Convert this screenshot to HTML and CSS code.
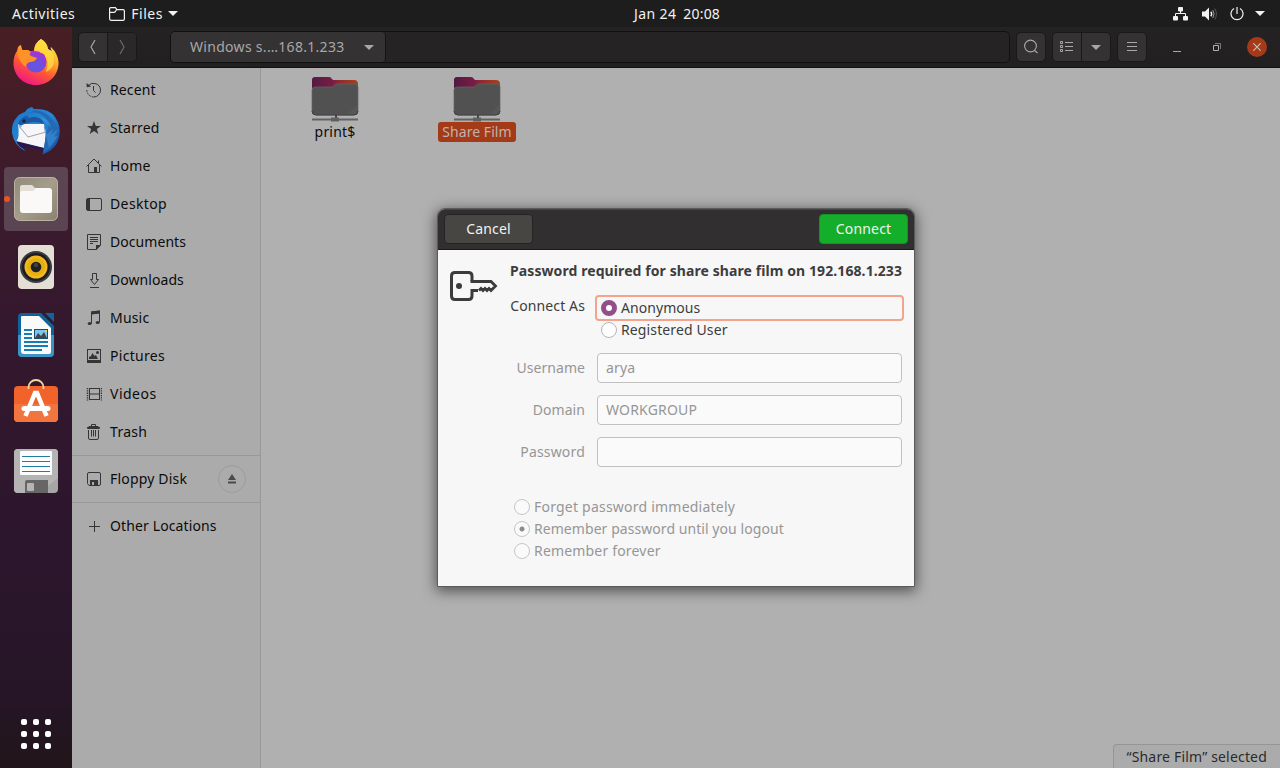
FILE: index.html
```html
<!DOCTYPE html>
<html lang="en">
<head>
<meta charset="utf-8">
<title>Files</title>
<link rel="stylesheet" href="styles.css">
</head>
<body>
<header class="topbar">
  <div class="topbar-left">
    <span class="ls-title">Activities</span>
    <span class="app-menu">
      <svg width="16" height="14" viewBox="0 0 16 14" fill="none" stroke="#f2f2f2" stroke-width="1.2"><path d="M.6 11.5V1.6Q.6.6 1.6.6H6.4L8 2.6H14Q15.4 2.6 15.4 4V12Q15.4 13.4 14 13.4H2.4Q.6 13.4.6 11.5ZM.6 5.4H4.8Q6 5.4 6.5 4.2L7.7 2.6"/></svg>
      <span class="ls-title app-name">Files</span>
      <svg width="10" height="5" viewBox="0 0 10 5" fill="#f2f2f2"><path d="M0 0H10L5 5Z"/></svg>
    </span>
  </div>
  <div class="clock"><span class="ls-date">Jan 24</span><span>20:08</span></div>
  <div class="tray">
    <svg width="16" height="14" viewBox="0 0 16 14" fill="#f2f2f2"><rect x="5" width="5" height="4.5" rx="1"/><rect y="9" width="5" height="4.5" rx="1"/><rect x="10" y="9" width="5" height="4.5" rx="1"/><path d="M2.5 10V6.5H12.5V10M7.5 4V6.5" fill="none" stroke="#f2f2f2"/></svg>
    <svg class="volume" width="15" height="14" viewBox="0 0 15 14" fill="none" stroke="#f2f2f2"><path d="M0 4.5H3L7 .5V13.5L3 9.5H0Z" fill="#f2f2f2" stroke="none"/><path d="M8.800 4.700Q10.600 7 8.800 9.300" stroke-width="1.4"/><path d="M10.800 3Q13.300 7 10.800 11" stroke="#999"/><path d="M12.800 1.500Q16 7 12.800 12.500" stroke="#555"/></svg>
    <svg class="power" width="14" height="14" viewBox="0 0 14 14" fill="none" stroke="#f2f2f2" stroke-width="1.2"><path d="M7 0V7M4 1.500A6 6 0 1 0 10 1.500"/></svg>
    <svg width="10" height="5" viewBox="0 0 10 5" fill="#f2f2f2"><path d="M0 0H10L5 5Z"/></svg>
  </div>
</header>
<div class="workspace">
  <nav class="dock">
    <div class="launcher raised">
      <svg width="48" height="48" viewBox="0 0 48 48">
        <defs>
          <linearGradient id="ff" x1=".8" y1="0" x2=".3" y2="1"><stop offset="0" stop-color="#fff44f"/><stop offset=".35" stop-color="#ffb02e"/><stop offset=".65" stop-color="#ff5634"/><stop offset="1" stop-color="#f0138b"/></linearGradient>
          <radialGradient id="ffg" cx=".5" cy=".7" r=".7"><stop offset="0" stop-color="#5a5be8"/><stop offset=".55" stop-color="#7a48dd"/><stop offset="1" stop-color="#b52ed0"/></radialGradient>
        </defs>
        <path d="M29 1Q35 4 36 11L40 13Q38 10 39 9Q46 16 46.500 24C47 37 37 47 24 47C11 47 1 37 1.500 24Q2 17 5 13L6 9Q8 7 9 7L10 12L15 12Q19 14 22 13Q22 5 29 1Z" fill="url(#ff)"/>
        <circle cx="24" cy="24" r="10.500" fill="url(#ffg)"/>
        <path d="M17 14Q23 11 28 13L27 15Q33 15 33 19L30 18Q26 15 22 16Z" fill="#a431d9"/>
        <path d="M6 18Q6 12 9 9L11 13L17 12Q16 15 19 18L25 20Q23 24 18 24Q14 25 14 29Q8 25 6 18Z" fill="#ff9226"/>
        <path d="M29 1Q35 5 36 11Q43 16 42 24Q41 31 34 34Q38 22 32 16Q27 13 22 13Q23 5 29 1Z" fill="#ffdc3e" opacity=".8"/>
      </svg>
    </div>
    <div class="launcher">
      <svg width="50" height="50" viewBox="0 0 50 50">
        <defs><linearGradient id="tb" x1="0" y1="0" x2="1" y2="1"><stop offset="0" stop-color="#1f74c6"/><stop offset=".5" stop-color="#2488d8"/><stop offset="1" stop-color="#1d3e91"/></linearGradient></defs>
        <path d="M14 6Q16 2 21 1L23 3Q38 2 44 11Q50 20 48.500 29Q46 44 31 48.500L34 43L10 38L14 45Q3 39 1 27Q0 17 6 11Q8 8 14 6Z" fill="url(#tb)"/>
        <path d="M7 18L14 18L33 18Q36 26 33 42L5 36Q9 32 7 18Z" fill="#f6f6f8"/>
        <path d="M8 20L17 31L35 26" fill="none" stroke="#a2a3aa"/>
        <path d="M5 35L33 42L33 45L15 40L13 43Q7 40 5 35Z" fill="#271752"/>
        <path d="M12 11Q20 4 29 8Q42 14 35 30L32 46Q46 41 47 25Q42 6 23 4Z" fill="#2569b4"/>
        <path d="M12 16Q20 9 28 12Q35 15 34 27L33 18Q22 13 9 20Z" fill="#1e559d"/>
        <path d="M35 29L42 23L40 29L47 23L43 31L47 30L38 42ZM29 11Q39 13 40 22" fill="#3c98dc" opacity=".55"/>
        <path d="M7 18Q10 10 17 10Q19 14 14 17L9 20Z" fill="#195da9"/><circle cx="13" cy="15" r="1.800" fill="#182640"/>
        <path d="M7 18L11 20L9 23Z" fill="#8fb8d4"/>
      </svg>
    </div>
    <div class="launcher active">
      <i class="running"></i>
      <svg width="46" height="46" viewBox="0 0 46 46">
        <defs><linearGradient id="fl" x1="0" y1="0" x2="1" y2="1"><stop offset="0" stop-color="#938b7b"/><stop offset=".5" stop-color="#a49d8b"/><stop offset="1" stop-color="#8b8272"/></linearGradient></defs>
        <rect x="1.500" y="1.500" width="43" height="43" rx="5" fill="url(#fl)" stroke="#b9b39f"/>
        <path d="M7 35V12Q7 9 9 9H19L22 12H36V35Z" fill="#e3dfd6"/>
        <path d="M7 17Q7 15 9 15H20L23 12H36Q39 12 39 15V34Q39 37 36 37H10Q7 37 7 34Z" fill="#faf9f8"/>
      </svg>
    </div>
    <div class="launcher">
      <svg width="38" height="46" viewBox="0 0 38 46"><rect x="1" y="1" width="36" height="44" rx="4" fill="#e4dfd4"/><circle cx="19" cy="23" r="16" fill="#3c3c43"/><circle cx="19" cy="23" r="14" fill="#1d1c20"/><circle cx="19" cy="23" r="11.500" fill="#f1b91d"/><circle cx="19" cy="23" r="9" fill="#dda90e" opacity=".6"/><circle cx="19" cy="23" r="5.300" fill="#202023"/><circle cx="19" cy="21" r="2.200" fill="#424246"/></svg>
    </div>
    <div class="launcher">
      <svg width="38" height="46" viewBox="0 0 38 46">
        <path d="M5 1H24L37 14V41Q37 45 33 45H5Q1 45 1 41V5Q1 1 5 1Z" fill="#10639a"/><path d="M1 23H37V41Q37 45 33 45H5Q1 45 1 41Z" fill="#3d94c4"/>
        <path d="M5 4H22L34 16V40Q34 42 32 42H7Q4 42 4 39V5Q4 4 5 4Z" fill="#fafafa"/><path d="M28 1H37V10Z" fill="#11659e"/>
        <path d="M7 18H15M7 22H15M7 26H15M7 30H31M7 34H31M7 38H25" stroke="#167eb5" stroke-width="2"/>
        <rect x="17" y="17" width="14" height="10" fill="#174d68"/><rect x="18" y="18" width="12" height="8" fill="#79c6ed"/><path d="M18 26L21 21L24 24L27 20L30 26Z" fill="#444"/><rect x="28" y="18" width="2" height="2" fill="#f2cf38"/>
      </svg>
    </div>
    <div class="launcher raised-more">
      <svg width="46" height="44" viewBox="0 0 46 44">
        <rect x="1" y="7" width="44" height="36" rx="4" fill="#f2622b"/><path d="M1 25H45V39Q45 43 41 43H5Q1 43 1 39Z" fill="#f2743f"/>
        <path d="M15.500 10V8.500A7.500 7.500 0 0 1 30.500 8.500V10" fill="none" stroke="#f6d49f" stroke-width="1.800"/>
        <path d="M12.500 37L22 14H24L33.500 37" fill="none" stroke="#fff" stroke-width="4.500"/><path d="M11 29.500H35" stroke="#fff" stroke-width="5" stroke-linecap="round"/>
      </svg>
    </div>
    <div class="launcher">
      <svg width="46" height="46" viewBox="0 0 46 46"><rect x="1" y="1" width="44" height="44" rx="4" fill="#a6a6a6"/><path d="M5 1H41Q45 1 45 5V30L27 45H5Q1 45 1 41V5Q1 1 5 1Z" fill="#b4b4b4"/><rect x="7" y="3" width="32" height="24" rx="1" fill="#fcfcfc"/><path d="M9 8.500H37M9 13.500H37M9 18.500H37M9 23.500H37" stroke="#267ba0"/><path d="M12 45V34Q12 32 14 32H35V45Z" fill="#666"/><rect x="14" y="35" width="7" height="8" rx="1" fill="#b5b5b5"/></svg>
    </div>
    <div class="app-grid"><i></i><i></i><i></i><i></i><i></i><i></i><i></i><i></i><i></i></div>
  </nav>
  <main class="window">
    <div class="headerbar">
      <div class="btn-group nav-buttons">
        <span class="btn"><svg width="8" height="16" viewBox="0 0 8 16" fill="none" stroke="#a8a8a8" stroke-width="1.200"><path d="M6 1L2 8L6 15"/></svg></span>
        <span class="btn"><svg width="8" height="16" viewBox="0 0 8 16" fill="none" stroke="#6c6b6b" stroke-width="1.200"><path d="M2 1L6 8L2 15"/></svg></span>
      </div>
      <div class="pathbar"><div class="path"><span class="ls-path">Windows s.…168.1.233</span><svg width="10" height="5" viewBox="0 0 10 5" fill="#a8a8a8"><path d="M0 0H10L5 5Z"/></svg></div></div>
      <div class="btn-group search"><span class="btn"><svg width="16" height="16" viewBox="0 0 16 16" fill="none" stroke="#a8a8a8" stroke-width="1.100"><circle cx="7.500" cy="7" r="5.900"/><path d="M11.500 11.500L14.500 14"/></svg></span></div>
      <div class="btn-group view"><span class="btn"><svg width="14" height="12" viewBox="0 0 14 12" fill="none" stroke="#a8a8a8"><path d="M5 1.500H13M5 5.500H13M5 9.500H13M.5.5H2.500V2.500H.5ZM.5 4.500H2.500V6.500H.5ZM.5 8.500H2.500V10.500H.5Z"/></svg></span><span class="btn"><svg width="10" height="5" viewBox="0 0 10 5" fill="#a8a8a8"><path d="M0 0H10L5 5Z"/></svg></span></div>
      <div class="btn-group menu"><span class="btn"><svg width="12" height="10" viewBox="0 0 12 10" fill="none" stroke="#a8a8a8"><path d="M1 .5H11M1 4.500H11M1 8.500H11"/></svg></span></div>
      <div class="controls">
        <svg class="minimize" width="8" height="9" viewBox="0 0 8 9" stroke="#a8a8a8"><path d="M0 7.500H8"/></svg>
        <svg width="8" height="8" viewBox="0 0 8 8" fill="none"><path d="M2 .5H7.500V6" stroke="#777"/><path d="M.5 2.500H5.500V7.500H.5Z" stroke="#b0b0b0"/></svg>
        <span class="close"><svg width="8" height="8" viewBox="0 0 8 8" stroke="#c4bdb9" stroke-width="1.200"><path d="M.3.3L7.700 7.700M7.700.3L.3 7.700"/></svg></span>
      </div>
    </div>
    <div class="content">
      <aside class="sidebar">
        <div class="places">
          <div class="place"><svg viewBox="0 0 16 16"><path d="M2.400 3.500A7 7 0 0 1 14.500 8A6.800 6.800 0 0 1 7.700 15"/><path d="M7.700 15A7 7 0 0 1 .8 8" stroke-dasharray="2 1"/><path d="M7.500 4V8.500L9.500 10.500"/><path class="solid" d="M.5 1L.8 5.300L5 4.500Z"/></svg><span class="ls-tight">Recent</span></div>
          <div class="place"><svg viewBox="0 0 16 16"><path class="solid" d="M8 1L9.800 6H15L10.800 9L12.300 14L8 11L3.700 14L5.200 9L1 6H6.200Z"/></svg><span>Starred</span></div>
          <div class="place"><svg viewBox="0 0 16 16"><path d="M.5 8.500L8 1L15.500 8.500M2.500 7V14.500H13.500V7M12.500 5V2.500"/><path class="solid" d="M8 9H11V14H8Z"/></svg><span>Home</span></div>
          <div class="place"><svg viewBox="0 0 16 16"><rect x=".5" y="2.500" width="15" height="12" rx="1.500"/><path class="solid" d="M1 3H4V14H1Z"/></svg><span class="ls-loose">Desktop</span></div>
          <div class="place"><svg viewBox="0 0 16 16"><path d="M1.500.5H14.500V11L10.500 15.500H1.500ZM4 3.500H12M4 5.500H12M4 7.500H12M4 9.500H7"/><path class="solid" d="M10 11H15L10 16Z"/></svg><span class="ls-none">Documents</span></div>
          <div class="place"><svg viewBox="0 0 16 16"><path d="M6.500 1.500H10.500V7.500H12.500L8.500 12.500L4.500 7.500H6.500ZM4 15.500H13"/></svg><span class="ls-none">Downloads</span></div>
          <div class="place"><svg viewBox="0 0 16 16"><path d="M5.500 13.500V2L13.500 1V12M5.500 4L13.500 3"/><path class="solid" d="M5 1.500L14 .5V3.200L5 4.200Z"/><ellipse class="solid" cx="3.700" cy="13.500" rx="2" ry="1.600"/><ellipse class="solid" cx="11.700" cy="12.500" rx="2" ry="1.600"/></svg><span>Music</span></div>
          <div class="place"><svg viewBox="0 0 16 16"><rect x="1.500" y="1.500" width="13" height="12"/><path class="solid" d="M1 12H15V15H1ZM3 11V9L5 8L6.500 5L8.500 8L10 7L12 11Z"/><circle class="solid" cx="11.500" cy="4.500" r="1.500"/></svg><span class="ls-path">Pictures</span></div>
          <div class="place"><svg viewBox="0 0 16 16"><path d="M3.500 2V14M13.500 2V14M3 2.500H14M3 8H14M3 13.500H14"/><path d="M1.500 2V14.500M15.500 2V14.500" stroke-width="1.500" stroke-dasharray="1.300 1"/></svg><span class="ls-title">Videos</span></div>
          <div class="place"><svg viewBox="0 0 16 16"><path d="M1 3.500H14M5.500 3V.5H9.500V3M2.500 6V14Q2.500 15.500 4 15.500H11Q12.500 15.500 12.500 14V6M5.500 6V12.500M7.500 6V12.500M9.500 6V12.500"/><path class="solid" d="M3 2H12L14 5H1Z"/></svg><span class="ls-path">Trash</span></div>
        </div>
        <div class="places mounts">
          <div class="place"><svg viewBox="0 0 16 16"><path d="M3 1.500H13Q14.500 1.500 14.500 3V13Q14.500 14.500 13 14.500H3L1.500 12.500V3Q1.500 1.500 3 1.500Z"/><path class="solid" fill-rule="evenodd" d="M4 9H12V15H4ZM6 11V14H8V11Z"/></svg><span>Floppy Disk</span><span class="eject"><svg viewBox="0 0 8 10"><path d="M4 0L8 6H0ZM0 7.500H8V9.500H0Z"/></svg></span></div>
        </div>
        <div class="places">
          <div class="place"><svg viewBox="0 0 16 16"><path d="M3 8.500H14M8.500 3V14"/></svg><span class="ls-tight">Other Locations</span></div>
        </div>
      </aside>
      <section class="files">
        <div class="file"><svg width="48" height="46" viewBox="0 0 48 46"><defs><linearGradient id="fd" x1="0" y1="0" x2="1" y2="0"><stop offset="0" stop-color="#531a41"/><stop offset=".45" stop-color="#7a1c44"/><stop offset=".6" stop-color="#8f2b30"/><stop offset="1" stop-color="#a8401b"/></linearGradient></defs><path d="M1 12V4Q1 1 4 1H18Q20 1 21 3L22 4H43Q47 4 47 8V14Z" fill="url(#fd)"/><path d="M1 14Q1 11 4 11H20Q22 11 23 9.500Q24 8 26 8H44Q47 8 47 11V35Q47 39 43 39H5Q1 39 1 35Z" fill="#515151" stroke="#646464" stroke-width=".7"/><path d="M36 38L47 28V35Q47 38 43 38Z" fill="#565656"/><path d="M1 35Q1 39 5 39H43Q47 39 47 35" fill="none" stroke="#3e3e3e"/><path d="M25 39V42" stroke="#444" stroke-width="2"/><path d="M1 43.500H47" stroke="#626262" stroke-width="2"/><rect x="20" y="41.500" width="8" height="4" fill="#606060"/></svg><span>print$</span></div>
        <div class="file selected"><svg width="48" height="46" viewBox="0 0 48 46"><path d="M1 12V4Q1 1 4 1H18Q20 1 21 3L22 4H43Q47 4 47 8V14Z" fill="url(#fd)"/><path d="M1 14Q1 11 4 11H20Q22 11 23 9.500Q24 8 26 8H44Q47 8 47 11V35Q47 39 43 39H5Q1 39 1 35Z" fill="#515151" stroke="#646464" stroke-width=".7"/><path d="M36 38L47 28V35Q47 38 43 38Z" fill="#565656"/><path d="M1 35Q1 39 5 39H43Q47 39 47 35" fill="none" stroke="#3e3e3e"/><path d="M25 39V42" stroke="#444" stroke-width="2"/><path d="M1 43.500H47" stroke="#626262" stroke-width="2"/><rect x="20" y="41.500" width="8" height="4" fill="#606060"/></svg><span class="ls-none">Share Film</span></div>
      </section>
      <div class="status">“Share Film” selected</div>
    </div>
  </main>
</div>
<div class="dialog">
  <div class="dialog-header"><span class="dbtn">Cancel</span><span class="dbtn connect">Connect</span></div>
  <div class="dialog-body">
    <svg class="key" width="50" height="32" viewBox="0 0 50 32" fill="none" stroke="#3b3b3b" stroke-width="3"><path d="M23 11V6Q23 2.500 19.500 2.500H6Q2.500 2.500 2.500 6V26Q2.500 29.500 6 29.500H19.500Q23 29.500 23 26V20.500H29"/><path d="M21.500 11.500H42L46.500 16L42 20.500L40 18.500L38 20.500L36 18.500L34 20.500L32 18.500L30 20.500" stroke-width="2.800"/><circle cx="10" cy="16" r="3" fill="#3b3b3b" stroke="none"/></svg>
    <div class="form">
      <h1>Password required for share share film on 192.168.1.233</h1>
      <div class="row connect-as"><span class="label ls-tight">Connect As</span>
        <div class="choices"><div class="radio focused"><i class="dot on"></i><span class="ls-none">Anonymous</span></div><div class="radio"><i class="dot"></i><span class="ls-tight">Registered User</span></div></div>
      </div>
      <div class="row dim"><span class="label ls-none">Username</span><div class="entry">arya</div></div>
      <div class="row dim"><span class="label ls-none">Domain</span><div class="entry">WORKGROUP</div></div>
      <div class="row dim"><span class="label">Password</span><div class="entry"></div></div>
      <div class="remember dim">
        <div class="radio"><i class="dot"></i><span class="ls-forget">Forget password immediately</span></div>
        <div class="radio"><i class="dot off"></i><span class="ls-none">Remember password until you logout</span></div>
        <div class="radio"><i class="dot"></i><span>Remember forever</span></div>
      </div>
    </div>
  </div>
</div>
</body>
</html>
```
FILE: styles.css
```css
* { box-sizing: border-box; }
body {
  margin: 0;
  width: 1280px;
  height: 768px;
  overflow: hidden;
  position: relative;
  display: flex;
  flex-direction: column;
  font: 14px/20px "Noto Sans", sans-serif;
  letter-spacing: .18px;
  white-space: nowrap;
}
svg { display: block; flex: none; }
.ls-title { letter-spacing: .5px; }
.ls-date { letter-spacing: .4px; }
.ls-path { letter-spacing: .3px; }
.ls-loose { letter-spacing: .38px; }
.ls-forget { letter-spacing: .22px; }
.ls-tight { letter-spacing: .12px; }
.ls-none { letter-spacing: .06px; }

.topbar {
  flex: none;
  height: 27px;
  background: #1d1d1d;
  color: #f2f2f2;
  display: grid;
  grid-template-columns: 1fr auto 1fr;
  align-items: center;
  padding: 0 15px 0 12px;
}
.topbar-left, .app-menu, .tray, .clock { display: flex; align-items: center; }
.topbar-left { gap: 34px; }
.app-name { margin: 0 5px 0 6px; }
.clock { gap: 7px; margin-left: 77px; }
.tray { justify-content: flex-end; }
.volume { margin: 0 13px; }
.power { margin-right: 11px; }

.workspace { flex: 1; display: flex; min-height: 0; }
.dock {
  width: 72px;
  padding: 4px 4px 16px;
  background: linear-gradient(#481f23, #3e1b2b 20%, #34182e 40%, #2c162d 70%, #261527 90%, #211519);
  display: flex;
  flex-direction: column;
  gap: 4px;
}
.launcher {
  height: 64px;
  display: flex;
  align-items: center;
  justify-content: center;
  position: relative;
}
.raised { padding-bottom: 2px; }
.raised-more { padding-bottom: 4px; }
.active { background: #5c4552; border-radius: 4px; }
.running {
  position: absolute;
  left: 0;
  top: 29px;
  width: 6px;
  height: 6px;
  border-radius: 50%;
  background: #e95420;
}
.app-grid {
  margin: auto auto 0;
  padding-bottom: 3px;
  display: grid;
  grid-template-columns: repeat(3, 6px);
  gap: 6px;
}
.app-grid i { height: 6px; border-radius: 2px; background: #fff; }

.window { flex: 1; display: flex; flex-direction: column; }
.headerbar {
  height: 41px;
  padding: 0 13px 0 6px;
  display: flex;
  align-items: center;
  background: linear-gradient(#252223, #211f20);
  border-bottom: 1px solid #121212;
}
.btn-group {
  display: flex;
  height: 30px;
  border: 1px solid #1a1818;
  border-radius: 5px;
  background: #353233;
}
.btn { width: 28px; display: grid; place-items: center; }
.btn + .btn { border-left: 1px solid #1a1818; width: 29px; }
.nav-buttons .btn + .btn { background: #2a2829; border-radius: 0 4px 4px 0; }
.pathbar {
  width: 840px;
  height: 32px;
  margin: 0 6px 0 33px;
  border: 1px solid #121111;
  border-radius: 5px;
  background: #252324;
}
.path {
  width: 215px;
  height: 30px;
  padding: 0 11px 0 19px;
  border-right: 1px solid #151414;
  border-radius: 4px;
  background: #353233;
  color: #a8a8a8;
  display: flex;
  align-items: center;
  justify-content: space-between;
}
.view { margin: 0 6px; }
.controls { flex: 1; display: flex; align-items: center; justify-content: flex-end; gap: 32px; }
.minimize { margin-top: 2px; }
.close {
  width: 20px;
  height: 20px;
  margin-left: -6px;
  border-radius: 50%;
  background: #a43a18;
  display: grid;
  place-items: center;
}

.content { flex: 1; display: flex; position: relative; background: #b0b0b0; }
.sidebar {
  width: 189px;
  padding-top: 3px;
  background: #ababab;
  border-right: 1px solid #999;
  color: #0c0c0c;
}
.place {
  height: 38px;
  padding: 0 14px;
  display: flex;
  align-items: center;
  gap: 8px;
}
.place > svg {
  width: 16px;
  height: 16px;
  fill: none;
  stroke: #353535;
}
.place .solid { fill: #353535; stroke: none; }
.mounts { margin: 4px 0; border: solid #999; border-width: 1px 0; padding: 4px 0; }
.eject {
  width: 28px;
  height: 28px;
  margin-left: auto;
  border: 1px solid #9b9b9b;
  border-radius: 50%;
  display: grid;
  place-items: center;
}
.eject svg { width: 8px; height: 10px; fill: #4a4a4a; }
.files { padding: 8px 0 0 3px; display: flex; align-items: flex-start; }
.file {
  width: 142px;
  display: flex;
  flex-direction: column;
  align-items: center;
  color: #0c0c0c;
}
.file span { padding: 0 4.500px; border-radius: 3px; }
.selected span { background: #a43a18; color: #bdb3af; }
.status {
  position: absolute;
  right: 0;
  bottom: 0;
  height: 24px;
  padding: 2px 13px 0 12px;
  border: solid #959595;
  border-width: 1px 0 0 1px;
  border-radius: 4px 0 0;
  background: #ababab;
  color: #2b2b2b;
}

.dialog {
  position: absolute;
  left: 437px;
  top: 208px;
  width: 478px;
  height: 379px;
  border: 1px solid #5b5b5b;
  border-radius: 8px 8px 0 0;
  background: #f7f7f7;
  color: #3d3d3d;
  box-shadow: 0 3px 14px 1px rgba(0, 0, 0, .55);
}
.dialog-header {
  height: 41px;
  padding: 4px 6px;
  border-top: 1px solid #464344;
  border-bottom: 1px solid #1a1818;
  border-radius: 7px 7px 0 0;
  background: #322f30;
  display: flex;
  justify-content: space-between;
  align-items: flex-start;
}
.dbtn {
  width: 89px;
  height: 30px;
  border: 1px solid #242222;
  border-radius: 4px;
  background: #484643;
  color: #f2f2f2;
  line-height: 28px;
  text-align: center;
}
.connect { background: #15ae2b; border-color: #119325; }
.dialog-body { display: flex; padding: 11px 10px 0 11px; }
.key { margin-top: 9px; }
.form { width: 392px; margin-left: 11px; }
h1 { margin: 0; font-size: 14px; line-height: 20px; letter-spacing: .09px; }
.row { display: flex; gap: 12px; margin-bottom: 12px; }
.label { width: 75px; text-align: right; line-height: 30px; flex: none; }
.connect-as { margin: 14px 0 12px; gap: 10px; }
.connect-as .label { line-height: 22px; }
.choices { flex: 1; margin-right: -2px; }
.radio { height: 22px; display: flex; align-items: center; gap: 4px; padding-left: 4px; }
.choices .radio { padding-left: 6px; }
.choices .focused {
  height: 26px;
  margin-bottom: -2px;
  padding-left: 4px;
  border: 2px solid #f2a58c;
  border-radius: 4px;
}
.dot {
  width: 16px;
  height: 16px;
  border: 1px solid #b5b5b5;
  border-radius: 50%;
  background: #fff;
  flex: none;
}
.on { border: 5.5px solid #924d8b; }
.dim { color: #969696; }
.dim .dot { border-color: #c6c6c6; background: #fafafa; }
.dim .off { background: radial-gradient(#8c8c8c 2px, #fafafa 3px); }
.entry {
  flex: 1;
  height: 30px;
  padding-left: 8px;
  border: 1px solid #c0c0c0;
  border-radius: 4px;
  background: #fafafa;
  line-height: 28px;
}
.remember { margin-top: 29px; }
```
